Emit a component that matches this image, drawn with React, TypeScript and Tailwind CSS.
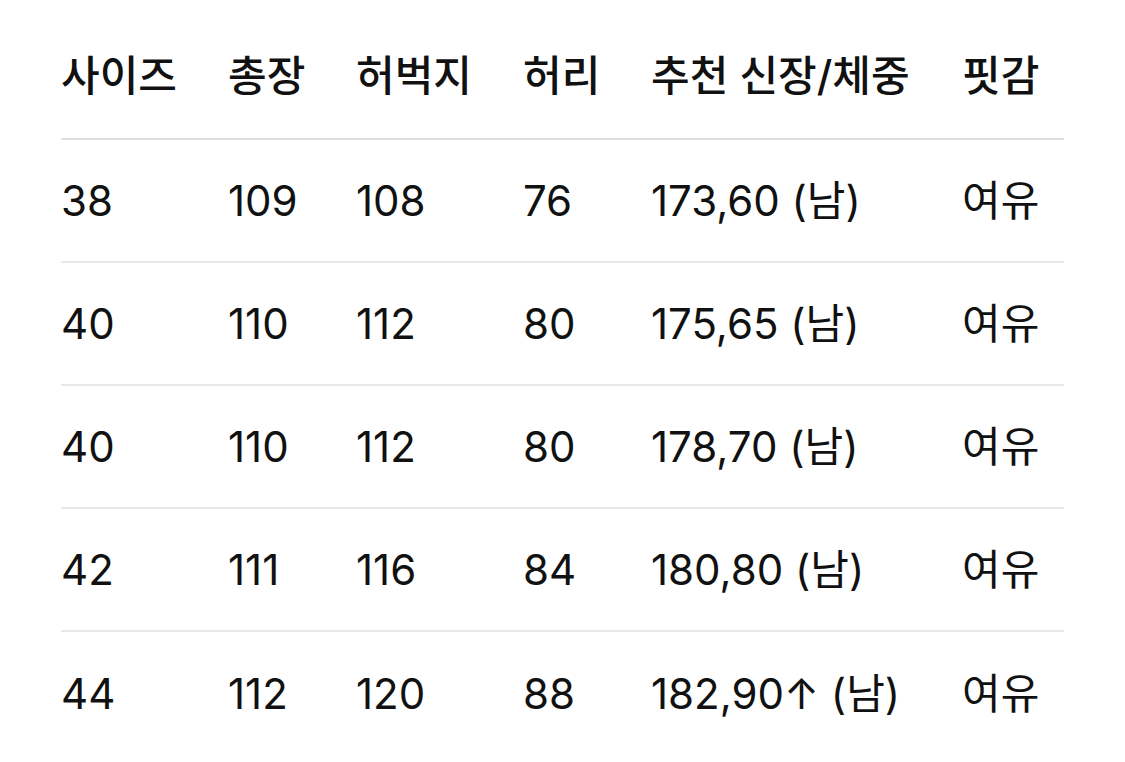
const HEADERS = ["사이즈", "총장", "허벅지", "허리", "추천 신장/체중", "핏감"];

const ROWS = [
  ["38", "109", "108", "76", "173,60 (남)", "여유"],
  ["40", "110", "112", "80", "175,65 (남)", "여유"],
  ["40", "110", "112", "80", "178,70 (남)", "여유"],
  ["42", "111", "116", "84", "180,80 (남)", "여유"],
  ["44", "112", "120", "88", "182,90↑ (남)", "여유"],
];

const COLS = "grid grid-cols-[167px_128px_167px_128px_311px_101px]";

export default function App() {
  return (
    <div
      className="h-[762px] w-[1125px] overflow-hidden bg-white px-[61px] text-[#111111]"
      style={{ fontFamily: 'Inter, "Noto Sans CJK KR", sans-serif' }}
    >
      {/* Header */}
      <div className={`${COLS} h-[140px] items-center border-b-2 border-[#e0e0e0] pt-[14px]`}>
        {HEADERS.map((h) => (
          <div key={h} className="text-[42px] font-medium leading-none whitespace-nowrap">
            {h}
          </div>
        ))}
      </div>

      {/* Rows */}
      {ROWS.map((row, i) => (
        <div
          key={i}
          className={`${COLS} h-[123px] items-center ${i < ROWS.length - 1 ? "border-b-2 border-[#e8e8e8]" : ""}`}
        >
          {row.map((cell, j) => (
            <div key={j} className="text-[42px] font-normal leading-none whitespace-nowrap">
              {cell}
            </div>
          ))}
        </div>
      ))}
    </div>
  );
}
